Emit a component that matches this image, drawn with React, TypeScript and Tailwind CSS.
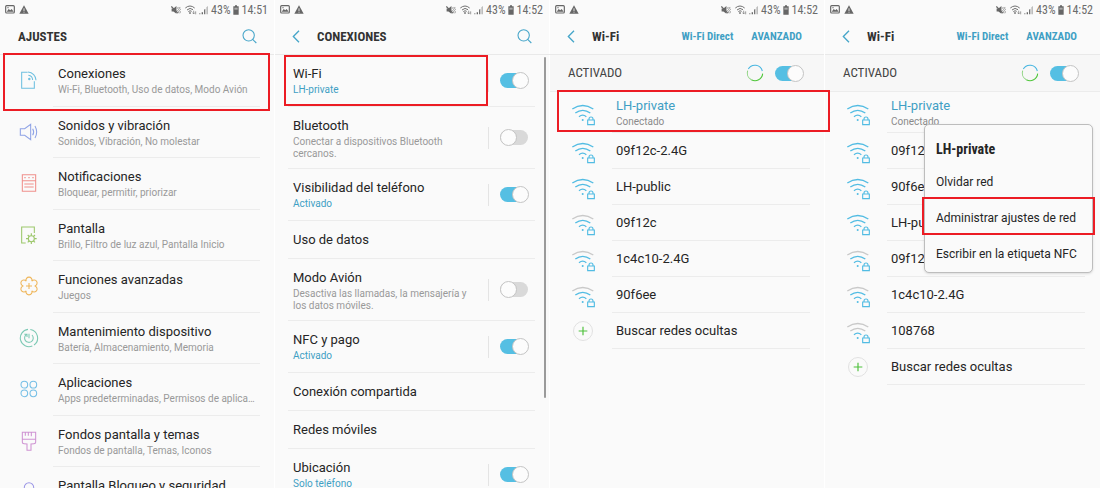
import React from "react";

const condensed = "font-['Roboto_Condensed',Roboto,sans-serif]";
const titleText = "block text-[13px] leading-[18px] text-[#252525]";
const subText = "mt-px text-[10px] leading-[12px]";
const redFrame = "pointer-events-none absolute z-20 border-2 border-[#ec1c24]";

function StatusBar({ time }: { time: string }) {
  return (
    <div className={`flex h-[19px] items-center pl-[5px] pr-[7px] text-[#6b6b6b] ${condensed}`}>
      <svg className="h-[9px] w-[10px]" viewBox="0 0 30 27" fill="none" aria-hidden="true">
        <rect x="2" y="2" width="26" height="22" rx="3" stroke="#666" strokeWidth="3.5" />
        <path d="M5 20l6-8 5 4 4-4 6 8z" fill="#666" />
        <circle cx="9" cy="8" r="2" fill="#666" />
      </svg>
      <svg className="ml-[4px] h-[9px] w-[10px]" viewBox="0 0 30 27" aria-hidden="true">
        <path d="M15 1L29 26H1z" fill="#666" />
        <path d="M15 10v8M15 20v3" stroke="#fafafa" strokeWidth="2.5" />
      </svg>
      <div className="ml-auto flex items-center">
        <svg className="h-[10px] w-[10px]" viewBox="0 0 33 30" fill="none" aria-hidden="true">
          <path d="M2 10h6l10-8v25L8 20H2z" fill="#666" />
          <path d="M1 3l21 22" stroke="#666" strokeWidth="4" />
          <path d="M24 5l-2 4 3 4-3 4 3 4-2 5M30 5l-2 4 3 4-3 4 3 4-2 5" stroke="#777" strokeWidth="2.4" />
        </svg>
        <svg className="ml-[4px] h-[10px] w-[12px]" viewBox="0 0 36 30" fill="none" stroke="#707070" strokeWidth="3" aria-hidden="true">
          <path d="M1 9Q15-3 29 9M6 15Q15 6 24 14M10 20Q15 15 20 19" />
          <circle cx="15" cy="24" r="1.5" fill="#777" />
          <path d="M26 17v9M23 23l3 4 3-4M32 28v-9" strokeWidth="2" />
        </svg>
        <svg className="ml-[2px] h-[10px] w-[10px]" viewBox="0 0 30 30" aria-hidden="true">
          <path d="M1 28v-3h3v3zM8 28v-6h4v6z" fill="#666" />
          <path d="M15 28V14l4-3v17z" fill="#777" />
          <path d="M22 28V7l5-4v25z" fill="#bdbdbd" />
        </svg>
        <span className="ml-[2px] text-[12px] leading-[14px]">43%</span>
        <svg className="ml-[2px] h-[10px] w-[6px]" viewBox="0 0 18 30" aria-hidden="true">
          <path d="M6 1h6v3h5v25H1V4h5z" fill="#666" />
          <path d="M4 8h10v6H4z" fill="#aaa" />
        </svg>
        <span className="ml-[3px] text-[12px] leading-[14px]">{time}</span>
      </div>
    </div>
  );
}

function SearchButton() {
  return (
    <button type="button" aria-label="Buscar" className="ml-auto block">
      <svg className="h-[15px] w-[15px]" viewBox="0 0 45 45" fill="none" stroke="#45a5c9" strokeWidth="3.2" aria-hidden="true">
        <circle cx="20" cy="19" r="17" />
        <path d="M32 31l11 11" />
      </svg>
    </button>
  );
}

function BackButton() {
  return (
    <button type="button" aria-label="Atrás" className="block w-[25px] shrink-0">
      <svg className="h-[13px] w-[8px]" viewBox="0 0 24 39" fill="none" stroke="#45a5c9" strokeWidth="4" aria-hidden="true">
        <path d="M21 2L4 19.500 21 37" />
      </svg>
    </button>
  );
}

function Header({ children }: { children: React.ReactNode }) {
  return (
    <header className={`flex h-[36px] items-center border-b border-[#e9e9e9] pr-[18px] ${condensed}`}>
      {children}
    </header>
  );
}

function Heading({ children }: { children: React.ReactNode }) {
  return <h2 className="text-[13px] font-bold leading-[18px] text-[#333]">{children}</h2>;
}

function Toggle({ label, on }: { label: string; on: boolean }) {
  return (
    <input
      type="checkbox"
      role="switch"
      aria-label={label}
      defaultChecked={on}
      className="relative block h-[15px] w-[28px] shrink-0 appearance-none rounded-full bg-[#d9d9d9] before:absolute before:-top-px before:left-0 before:h-[17px] before:w-[17px] before:rounded-full before:border before:border-[#c4c4c4] before:bg-[#fcfcfc] checked:bg-[#55bfe3] checked:before:left-[12px]"
    />
  );
}

const icons: Record<string, React.ReactNode> = {
  connections: (
    <g stroke="#6fc0e0">
      <path d="M26 7H8v48h38V34" />
      <path d="M27 6a25 25 0 0 1 24 25M28 16a15 15 0 0 1 13 14" />
      <circle cx="31" cy="27" r="2" fill="#6fc0e0" />
    </g>
  ),
  sound: (
    <g stroke="#8fa3e6">
      <path d="M4 20h13L35 7v46L17 40H4zM41 20q6 10 0 20M48 12q10 18 0 36" />
    </g>
  ),
  notifications: (
    <g stroke="#f0908c">
      <path d="M10 5h40v50H10zM10 23h40M16 33h28M16 42h28" />
      <path d="M16 14h4M28 14h4M40 14h4" strokeWidth="4" />
    </g>
  ),
  display: (
    <g stroke="#9cc76b">
      <path d="M20 54H8V6h38v18" />
      <circle cx="37" cy="41" r="9" />
      <path d="M37 32v-7M37 50v7M28 41h-7M46 41h7M30.600 34.600l-4.500-4.500M43.400 34.600l4.500-4.500M30.600 47.400l-4.500 4.500M43.400 47.400l4.500 4.500" strokeWidth="3.500" />
    </g>
  ),
  advanced: (
    <g stroke="#efb65a">
      <path d="M47 30A9 9 0 1 0 38.500 15.300A9 9 0 1 0 21.500 15.300A9 9 0 1 0 13 30A9 9 0 1 0 21.500 44.700A9 9 0 1 0 38.500 44.700A9 9 0 1 0 47 30Z" />
      <path d="M30 21v18M21 30h18" />
    </g>
  ),
  maintenance: (
    <g stroke="#7cc9b4">
      <path d="M34 4.300A26 26 0 0 1 45 51M40 54A26 26 0 1 1 27 4.200" />
      <path d="M39 21a13 13 0 1 1-16-2M30 17v14M16 19h8v8" />
    </g>
  ),
  apps: (
    <g stroke="#76bfe6">
      <circle cx="16" cy="17" r="10" />
      <circle cx="43" cy="17" r="10" />
      <circle cx="16" cy="43" r="10" />
      <circle cx="43" cy="43" r="10" />
    </g>
  ),
  themes: (
    <g stroke="#cf94d3">
      <path d="M10 4h40v30q0 4-5 4l-9 1v19H24V39l-9-1q-5 0-5-4zM10 25h40M19 4v10M28 4v10M37 4v12" />
    </g>
  ),
  lock: (
    <g stroke="#9c97e6">
      <path d="M16 30V16a14 14 0 0 1 28 0v14M8 30h44v28H8z" />
    </g>
  ),
};

const settings = [
  { icon: "connections", title: "Conexiones", sub: "Wi-Fi, Bluetooth, Uso de datos, Modo Avión", framed: true },
  { icon: "sound", title: "Sonidos y vibración", sub: "Sonidos, Vibración, No molestar" },
  { icon: "notifications", title: "Notificaciones", sub: "Bloquear, permitir, priorizar" },
  { icon: "display", title: "Pantalla", sub: "Brillo, Filtro de luz azul, Pantalla Inicio" },
  { icon: "advanced", title: "Funciones avanzadas", sub: "Juegos" },
  { icon: "maintenance", title: "Mantenimiento dispositivo", sub: "Batería, Almacenamiento, Memoria" },
  { icon: "apps", title: "Aplicaciones", sub: "Apps predeterminadas, Permisos de aplica…" },
  { icon: "themes", title: "Fondos pantalla y temas", sub: "Fondos de pantalla, Temas, Iconos" },
  { icon: "lock", title: "Pantalla Bloqueo y seguridad", sub: "" },
];

function SettingsPanel() {
  return (
    <section className="min-w-0">
      <StatusBar time="14:51" />
      <Header>
        <div className="flex w-full items-center pl-[18px]">
          <Heading>AJUSTES</Heading>
          <SearchButton />
        </div>
      </Header>
      <ul>
        {settings.map((s) => (
          <li key={s.title} className="relative odd:h-[52px] even:h-[51px]">
            {s.framed && <span className={`${redFrame} -bottom-[4px] -top-[2px] left-[3px] right-[5px]`} />}
            <a href="#" className="flex h-full pl-[19px] pr-[15px]">
              <svg className="mt-[15px] h-[20px] w-[20px] shrink-0" viewBox="0 0 60 60" fill="none" strokeWidth="3.2" aria-hidden="true">
                {icons[s.icon]}
              </svg>
              <span className="ml-[14px] min-w-0 flex-1 border-b border-[#ececec] pl-[5px] pt-[10px]">
                <span className={titleText}>{s.title}</span>
                <span className={`block truncate text-[#999] ${subText}`}>{s.sub}</span>
              </span>
            </a>
          </li>
        ))}
      </ul>
    </section>
  );
}

type Connection = { title: string; sub?: string; active?: boolean; on?: boolean; framed?: boolean };

const connections: Connection[] = [
  { title: "Wi-Fi", sub: "LH-private", active: true, on: true, framed: true },
  { title: "Bluetooth", sub: "Conectar a dispositivos Bluetooth cercanos.", on: false },
  { title: "Visibilidad del teléfono", sub: "Activado", active: true, on: true },
  { title: "Uso de datos" },
  { title: "Modo Avión", sub: "Desactiva las llamadas, la mensajería y los datos móviles.", on: false },
  { title: "NFC y pago", sub: "Activado", active: true, on: true },
  { title: "Conexión compartida" },
  { title: "Redes móviles" },
  { title: "Ubicación", sub: "Solo teléfono", active: true, on: true },
];

function ConnectionsPanel() {
  return (
    <section className="relative min-w-0 shadow-[-1px_0_0_#fff]">
      <StatusBar time="14:52" />
      <Header>
        <div className="flex w-full items-center pl-[17px]">
          <BackButton />
          <Heading>CONEXIONES</Heading>
          <SearchButton />
        </div>
      </Header>
      <ul className="pl-[13px] pr-[15px]">
        {connections.map((c) => (
          <li
            key={c.title}
            className={`relative flex items-center border-b border-[#ececec] ${c.sub ? "min-h-[52px]" : ""}`}
          >
            <button
              type="button"
              className={`flex-1 self-start pl-[5px] pr-[16px] pt-[10px] text-left ${c.sub ? "pb-[8px]" : "pb-[9px]"}`}
            >
              <span className={titleText}>{c.title}</span>
              {c.sub && <span className={`block ${subText} ${c.active ? "text-[#3f9fc4]" : "text-[#999]"}`}>{c.sub}</span>}
            </button>
            {c.on !== undefined && (
              <div className="flex h-[22px] items-center border-l border-[#e4e4e4] pl-[11px] pr-[7px]">
                <Toggle label={c.title} on={c.on} />
              </div>
            )}
            {c.framed && <span className={`${redFrame} -left-[4px] bottom-0 right-[47px] top-0`} />}
          </li>
        ))}
      </ul>
      <div className="absolute right-[4px] top-[57px] h-[341px] w-[2px] rounded-full bg-[#9b9b9b]" />
    </section>
  );
}

function WifiIcon({ strength }: { strength: number }) {
  const color = (level: number) => (strength >= level ? "#52bce3" : "#c9c9c9");
  return (
    <svg className="h-[22px] w-[24px]" viewBox="0 0 72 66" fill="none" strokeWidth="4" aria-hidden="true">
      <path d="M4 15Q35-6 67 15" stroke={color(3)} />
      <path d="M13 27Q35 11 58 27" stroke={color(2)} />
      <path d="M24 38Q35 29 46 38" stroke={color(1)} />
      <circle cx="35" cy="48" r="3" fill="#52bce3" />
      <path d="M50 48h20v14H50zM54 48v-3a6 6 0 0 1 12 0v3" fill="#fafafa" stroke="#52bce3" strokeWidth="3.400" />
    </svg>
  );
}

type Network = { name: string; strength: number; connected?: boolean; framed?: boolean };

function WifiPanel({ networks, children }: { networks: Network[]; children?: React.ReactNode }) {
  return (
    <section className="min-w-0 shadow-[-1px_0_0_#fff]">
      <StatusBar time="14:52" />
      <Header>
        <div className="flex w-full items-center pl-[17px] pr-[5px]">
          <BackButton />
          <Heading>Wi-Fi</Heading>
          <div className="ml-auto flex gap-[18px] text-[11px] font-bold leading-[18px] text-[#3f9fc4]">
            <button type="button">Wi-Fi Direct</button>
            <button type="button">AVANZADO</button>
          </div>
        </div>
      </Header>
      <div className={`flex h-[37px] items-center border-b border-[#ececec] bg-[#f7f7f7] pl-[18px] pr-[22px] ${condensed}`}>
        <span className="text-[13px] leading-[18px] text-[#444]">ACTIVADO</span>
        <svg className="ml-auto mr-[11px] h-[18px] w-[18px]" viewBox="0 0 54 54" fill="none" strokeWidth="3.2" aria-hidden="true">
          <path d="M7 15A23 23 0 0 1 49 21" stroke="#45b5e0" />
          <path d="M50 29A23 23 0 0 1 16 47.300" stroke="#4fc63a" />
          <path d="M16 47.300A23 23 0 0 1 5 20" stroke="#8fd482" />
        </svg>
        <Toggle label="Activado" on />
      </div>
      <div className="relative">
        <ul>
          {networks.map((n) => (
            <li key={n.name} className="relative">
              {n.framed && <span className={`${redFrame} -right-[5px] -top-[2px] bottom-px left-[7px]`} />}
              <button type="button" className="flex w-full items-center pl-[21px] pr-[15px] text-left">
                <span className="pt-[4px]">
                  <WifiIcon strength={n.strength} />
                </span>
                <span
                  className={`ml-[17px] flex-1 border-b border-[#ececec] pl-[4px] ${n.connected ? "pb-[4px] pt-[5px]" : "pb-[8px] pt-[9px]"}`}
                >
                  <span className={n.connected ? "block text-[13px] leading-[18px] text-[#3f9fc4]" : titleText}>{n.name}</span>
                  {n.connected && <span className={`block text-[#8a8a8a] ${subText}`}>Conectado</span>}
                </span>
              </button>
            </li>
          ))}
          <li>
            <button type="button" className="flex w-full items-center pl-[23px] pr-[15px] text-left">
              <svg className="h-[20px] w-[20px]" viewBox="0 0 60 60" fill="none" aria-hidden="true">
                <circle cx="30" cy="30" r="28.500" stroke="#dcdcdc" strokeWidth="2.500" />
                <path d="M30 17v26M17 30h26" stroke="#4fc13c" strokeWidth="3.500" />
              </svg>
              <span className="ml-[19px] flex-1 border-b border-[#ececec] pb-[8px] pl-[4px] pt-[9px]">
                <span className={titleText}>Buscar redes ocultas</span>
              </span>
            </button>
          </li>
        </ul>
        {children}
      </div>
    </section>
  );
}

const menuItem = "relative flex h-[36px] w-full items-center pl-[11px] text-left text-[12px] leading-[18px] text-[#252525]";

function NetworkMenu() {
  return (
    <div
      role="menu"
      aria-label="LH-private"
      className="absolute left-[99px] right-[7px] top-[32px] z-10 rounded-[5px] border border-[#bdbdbd] bg-[#fafafa] pt-[8px] shadow-sm"
    >
      <h3 className={`flex h-[31px] items-center pl-[11px] text-[14px] font-bold leading-[18px] text-[#252525] ${condensed}`}>
        LH-private
      </h3>
      <button type="button" role="menuitem" className={menuItem}>
        Olvidar red
      </button>
      <button type="button" role="menuitem" className={menuItem}>
        Administrar ajustes de red
        <span className={`${redFrame} -inset-x-[3px] -top-[3px] bottom-px`} />
      </button>
      <button type="button" role="menuitem" className={menuItem}>
        Escribir en la etiqueta NFC
      </button>
    </div>
  );
}

const before: Network[] = [
  { name: "LH-private", strength: 3, connected: true, framed: true },
  { name: "09f12c-2.4G", strength: 3 },
  { name: "LH-public", strength: 3 },
  { name: "09f12c", strength: 2 },
  { name: "1c4c10-2.4G", strength: 2 },
  { name: "90f6ee", strength: 2 },
];

const after: Network[] = [
  { name: "LH-private", strength: 3, connected: true },
  { name: "09f12c-2.4G", strength: 3 },
  { name: "90f6ee", strength: 3 },
  { name: "LH-public", strength: 3 },
  { name: "09f12c", strength: 2 },
  { name: "1c4c10-2.4G", strength: 2 },
  { name: "108768", strength: 1 },
];

export default function App() {
  return (
    <main className="grid h-screen grid-cols-4 overflow-hidden bg-[#fafafa] font-[Roboto,sans-serif]">
      <SettingsPanel />
      <ConnectionsPanel />
      <WifiPanel networks={before} />
      <WifiPanel networks={after}>
        <NetworkMenu />
      </WifiPanel>
    </main>
  );
}
